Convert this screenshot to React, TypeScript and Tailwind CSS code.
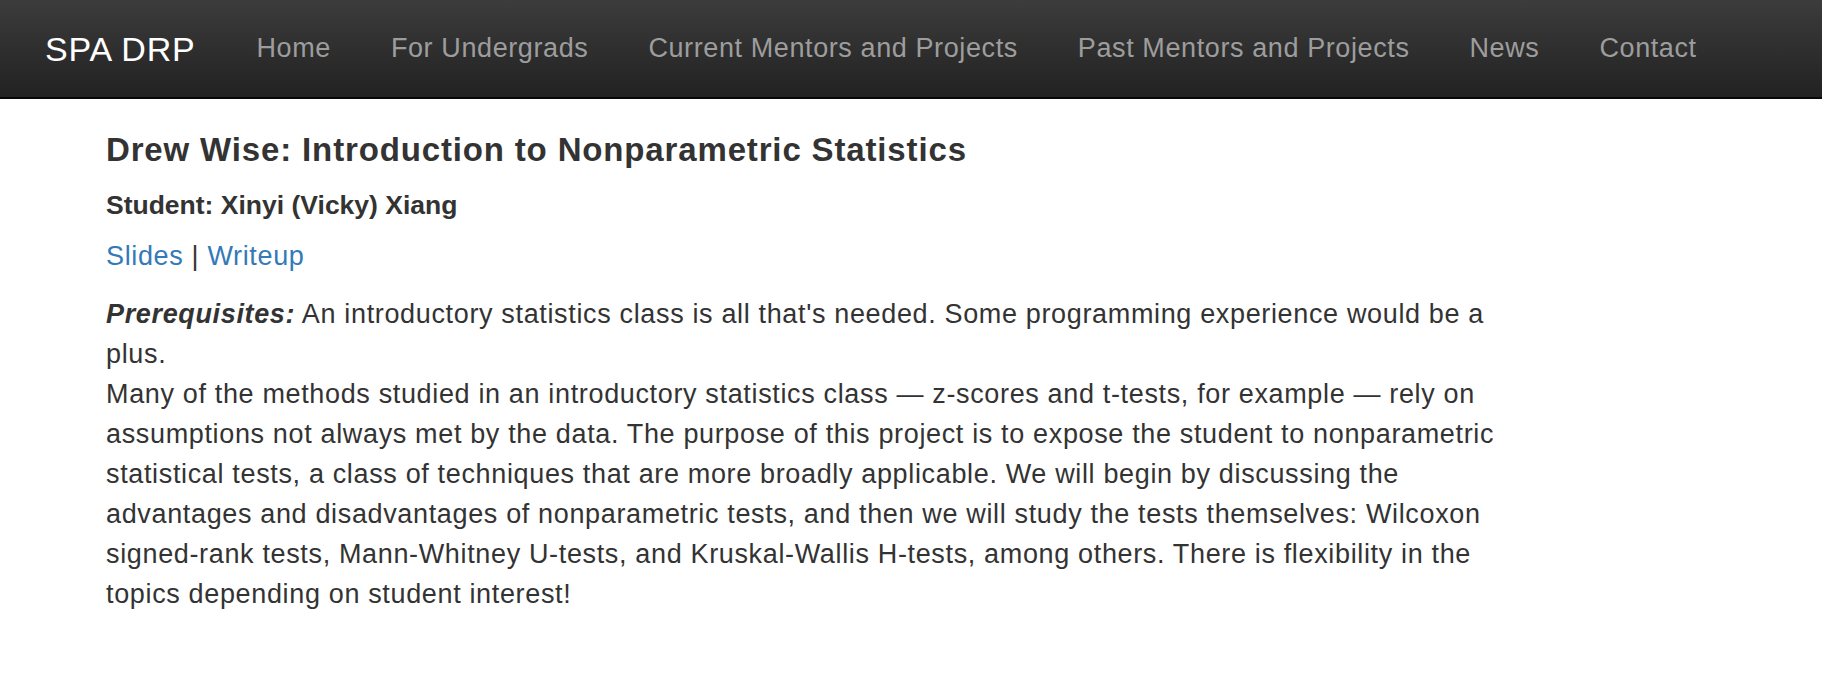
import React from "react";

const links = [
  "Home",
  "For Undergrads",
  "Current Mentors and Projects",
  "Past Mentors and Projects",
  "News",
  "Contact",
];

export default function App() {
  return (
    <div className="min-h-[680px] bg-white" style={{ fontFamily: '"Liberation Sans", Arial, sans-serif' }}>
      <nav className="h-[99px] border-b-2 border-[#080808] bg-gradient-to-b from-[#3c3c3c] to-[#222222] flex items-center pl-[45px]">
        <span className="text-white text-[34px] tracking-[0.8px] leading-none pr-[31px]">SPA DRP</span>
        <ul className="flex items-center">
          {links.map((l) => (
            <li key={l} className="px-[30px] text-[27px] tracking-[0.6px] text-[#9d9d9d] leading-none">
              {l}
            </li>
          ))}
        </ul>
      </nav>
      <main className="pl-[106px] w-[1516px] text-[#333333]">
        <h3 className="mt-[33px] text-[33px] tracking-[0.85px] leading-[36px] font-bold">
          Drew Wise: Introduction to Nonparametric Statistics
        </h3>
        <h5 className="mt-[18px] text-[26.5px] leading-[39.3px] font-bold">
          Student: Xinyi (Vicky) Xiang
        </h5>
        <p className="mt-[12px] text-[27px] tracking-[0.65px] leading-[39.3px]">
          <a className="text-[#337ab7]">Slides</a> | <a className="text-[#337ab7]">Writeup</a>
        </p>
        <div className="mt-[17px] text-[27px] tracking-[0.65px] leading-[40px]">
          <p>
            <b className="italic">Prerequisites:</b> An introductory statistics class is all that's needed. Some
            programming experience would be a plus.
          </p>
          <p>
            Many of the methods studied in an introductory statistics class — z-scores and t-tests, for example —
            rely on assumptions not always met by the data. The purpose of this project is to expose the student to
            nonparametric statistical tests, a class of techniques that are more broadly applicable. We will begin
            by discussing the advantages and disadvantages of nonparametric tests, and then we will study the tests
            themselves: Wilcoxon signed-rank tests, Mann-Whitney U-tests, and Kruskal-Wallis H-tests, among others.
            There is flexibility in the topics depending on student interest!
          </p>
        </div>
      </main>
    </div>
  );
}
